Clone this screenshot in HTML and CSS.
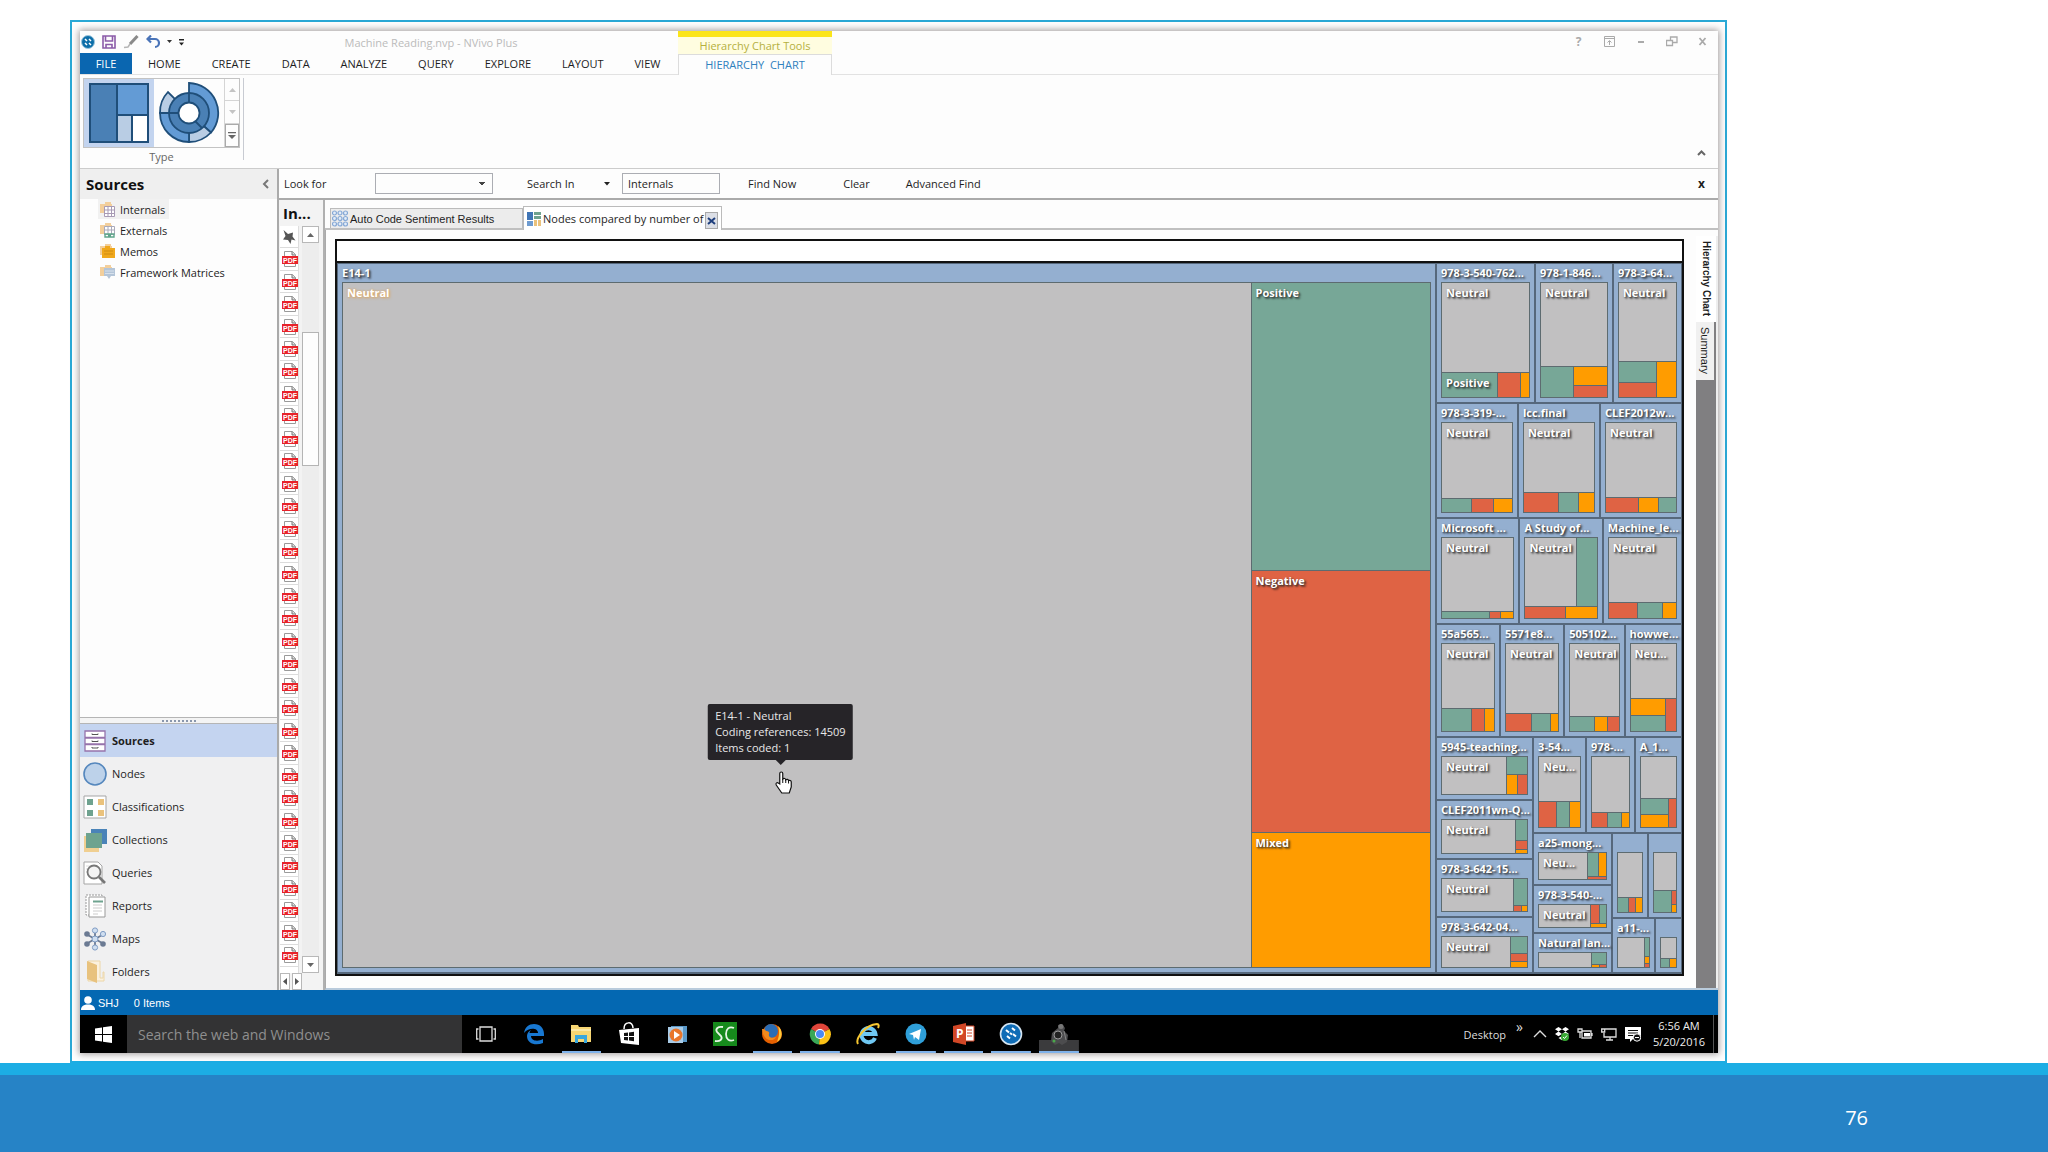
FILE: index.html
```html
<!DOCTYPE html>
<html lang="en">
<head>
    <meta charset="UTF-8">
    <meta name="viewport" content="width=device-width, initial-scale=1.0">
    <title>Machine Reading.nvp - NVivo Plus</title>
    <link rel="stylesheet" href="styles.css">
</head>
<body>
    <svg class="defs" width="0" height="0" aria-hidden="true">
        <symbol id="folder" viewBox="0 0 16 16">
            <path d="M0 3h5V1h6v2h1v9H0z" fill="#f3cf9c"/>
        </symbol>
    </svg>

    <main class="slide">
        <div class="frame">
            <div class="window">
                <header class="titlebar">
                    <div class="title-left">
                        <div class="title-row">
                            <div class="quick">
                                <svg width="14" height="14" viewBox="0 0 14 14"><circle cx="7" cy="7" r="6.500" fill="#0d6ea8" stroke="#9cc6dd"/><path d="M4 4l2 2M8 4l2 2M4 8l2 2M8 8l2 2" stroke="#fff" stroke-width="1.500"/></svg>
                                <svg width="14" height="14" viewBox="0 0 14 14"><path d="M1 1h12v12H1zM3.500 1v5h7V1M4 13V9.500h6V13" fill="none" stroke="#8b5ba8" stroke-width="1.600"/></svg>
                                <svg width="16" height="14" viewBox="0 0 16 14"><path d="M14.500 1L7 9" stroke="#8a8a8a" stroke-width="3"/><path d="M7 9l-2 3-4 .5" stroke="#b5b5b5" stroke-width="1.500" fill="none"/></svg>
                                <svg width="14" height="14" viewBox="0 0 14 14"><path d="M1.500 4H9a4 4 0 0 1 0 8M5 .5L1.500 4 5 7.500" fill="none" stroke="#4a74b8" stroke-width="2.200"/></svg>
                                <svg width="5" height="4" viewBox="0 0 5 4"><path d="M0 0h5L2.500 3z" fill="#333"/></svg>
                                <svg width="5" height="7" viewBox="0 0 5 7"><path d="M0 0h5v1.500H0zM0 3.500h5L2.500 6.500z" fill="#222"/></svg>
                            </div>
                            <h1 class="app-title">Machine Reading.nvp - NVivo Plus</h1>
                        </div>
                        <nav class="ribbon-tabs">
                            <button class="ribbon-tab file">FILE</button>
                            <button class="ribbon-tab">HOME</button>
                            <button class="ribbon-tab">CREATE</button>
                            <button class="ribbon-tab">DATA</button>
                            <button class="ribbon-tab">ANALYZE</button>
                            <button class="ribbon-tab">QUERY</button>
                            <button class="ribbon-tab">EXPLORE</button>
                            <button class="ribbon-tab">LAYOUT</button>
                            <button class="ribbon-tab">VIEW</button>
                        </nav>
                    </div>
                    <div class="context">
                        <div class="context-title">Hierarchy Chart Tools</div>
                        <button class="context-tab">HIERARCHY &nbsp;CHART</button>
                    </div>
                    <div class="window-controls">
                        <button class="wc" aria-label="Help"><b>?</b></button>
                        <button class="wc" aria-label="Ribbon options"><svg width="11" height="11" viewBox="0 0 11 11"><path d="M.5 .5h10v10H.5zM.5 2.500h10M5.500 9V5M3.500 6.500l2-2 2 2" fill="none" stroke="#aaa"/></svg></button>
                        <button class="wc" aria-label="Minimize"><svg width="8" height="10" viewBox="0 0 8 10"><path d="M1 5h6" stroke="#aaa" stroke-width="2"/></svg></button>
                        <button class="wc" aria-label="Restore"><svg width="12" height="11" viewBox="0 0 12 11"><path d="M.5 4.500h6v5h-6zM4.500 4V1h6.500v5.500H7" fill="none" stroke="#aaa" stroke-width="1.300"/></svg></button>
                        <button class="wc" aria-label="Close"><svg width="9" height="9" viewBox="0 0 9 9"><path d="M1.500 1l6 7M7.500 1l-6 7" stroke="#aaa" stroke-width="1.800"/></svg></button>
                    </div>
                </header>

                <section class="ribbon">
                    <div class="group">
                        <div class="gallery">
                            <button class="chart-type selected" aria-label="Treemap">
                                <svg width="60" height="60" viewBox="0 0 60 60"><g stroke="#1f4e79" stroke-width="2"><rect x="1" y="1" width="27" height="58" fill="#4a80b5"/><rect x="28" y="1" width="31" height="31" fill="#639bd5"/><rect x="28" y="32" width="15" height="27" fill="#b9cde4"/><rect x="43" y="32" width="16" height="27" fill="#fff"/></g></svg>
                            </button>
                            <button class="chart-type" aria-label="Sunburst">
                                <svg width="62" height="62" viewBox="0 0 62 62"><g stroke="#1f4e79" stroke-width="1.800"><path d="M31 1a30 30 0 0 1 22 49.500L31 31z" fill="#639bd5"/><path d="M53 50.500A30 30 0 0 1 31 60V31z" fill="#b9cde4"/><path d="M31 60A29 29 0 0 1 2 31h29z" fill="#639bd5"/><path d="M2 31A29 29 0 0 1 10 10l21 21z" fill="#b9cde4"/><circle cx="31" cy="31" r="20" fill="#4a80b5"/><path d="M31 11v10M11 31h10M44 46l-7-7" /><circle cx="31" cy="31" r="10.500" fill="#fff"/></g></svg>
                            </button>
                            <div class="gallery-scroll">
                                <button aria-label="Up"><svg width="7" height="4" viewBox="0 0 7 4"><path d="M0 4l3.500-4L7 4z" fill="#c4c4c4"/></svg></button>
                                <button aria-label="Down"><svg width="7" height="4" viewBox="0 0 7 4"><path d="M0 0l3.500 4L7 0z" fill="#c4c4c4"/></svg></button>
                                <button class="more" aria-label="More"><svg width="8" height="7" viewBox="0 0 8 7"><path d="M0 0h8v1.200H0zM0 3l4 4 4-4z" fill="#666"/></svg></button>
                            </div>
                        </div>
                        <div class="group-name">Type</div>
                    </div>
                    <button class="collapse" aria-label="Collapse the ribbon"><svg width="9" height="6" viewBox="0 0 9 6"><path d="M1 5l3.500-3.500L8 5" fill="none" stroke="#666" stroke-width="2"/></svg></button>
                </section>

                <div class="workspace">
                    <aside class="sidebar">
                        <div class="side-head">
                            <h2>Sources</h2>
                            <button aria-label="Collapse panel"><svg width="7" height="10" viewBox="0 0 7 10"><path d="M6 1L2 5l4 4" fill="none" stroke="#777" stroke-width="2"/></svg></button>
                        </div>
                        <ul class="tree">
                            <li><a href="#" class="tree-item current"><svg width="16" height="16"><use href="#folder"/><path d="M4.500 5.500h10v10h-10zM4.500 9h10M4.500 12.500h10M8 5.500v10M11.500 5.500v10" fill="#fff" stroke="#a89bb5"/></svg>Internals</a></li>
                            <li><a href="#" class="tree-item"><svg width="16" height="16"><use href="#folder"/><path d="M4.500 4.500h10v8h-10zM4.500 8h10M8 4.500v8M11.500 4.500v8" fill="#fff" stroke="#aab"/><path d="M5 12h4v3H5zM10 12h4v3h-4zM8 13.500h3" fill="none" stroke="#5fa58b" stroke-width="1.400"/></svg>Externals</a></li>
                            <li><a href="#" class="tree-item"><svg width="16" height="16"><use href="#folder"/><path d="M2 5h3V3h5v2h5v10H2z" fill="#f0a81c"/><path d="M4 8h9M4 11h9" stroke="#d08c10"/></svg>Memos</a></li>
                            <li><a href="#" class="tree-item"><svg width="16" height="16"><use href="#folder"/><path d="M4 4h11v8h-4l-2 3-2-3H4z" fill="#b4c5d8"/><path d="M5 7h9M5 9.500h9" stroke="#d7e1ec"/></svg>Framework Matrices</a></li>
                        </ul>
                        <div class="splitter"><span></span></div>
                        <nav class="areas">
                            <a href="#" class="area active"><svg width="24" height="24" viewBox="0 0 24 24"><g fill="#fff" stroke="#9673ab" stroke-width="1.300"><path d="M2 2h20v6.500H2zM2 9h20v6H2zM2 15.500h20V22H2z"/></g><path d="M9 4.500v1h6v-1M9 11.500v1h6v-1M9 18v1h6v-1" fill="none" stroke="#555"/></svg>Sources</a>
                            <a href="#" class="area"><svg width="24" height="24" viewBox="0 0 24 24"><circle cx="12" cy="12" r="11" fill="#bdd2ea" stroke="#5587bd" stroke-width="1.600"/></svg>Nodes</a>
                            <a href="#" class="area"><svg width="24" height="24" viewBox="0 0 24 24"><path d="M1 1h22v22H1z" fill="#fff" stroke="#a5a5a5"/><path d="M4 4h6v6H4zM4 15h6v6H4z" fill="#6fa28f"/><path d="M15 4h6v6h-6zM15 15h6v6h-6z" fill="#eac27c"/></svg>Classifications</a>
                            <a href="#" class="area"><svg width="24" height="24" viewBox="0 0 24 24"><path d="M1 8h15v16H1z" fill="#f0cf91"/><path d="M8 1h16v15H8z" fill="#4a83b8"/><path d="M3 5h16v15H3z" fill="#6ea38f"/></svg>Collections</a>
                            <a href="#" class="area"><svg width="24" height="24" viewBox="0 0 24 24"><path d="M1 1h14l4 4v18H1z" fill="#fff" stroke="#a5a5a5"/><path d="M3 5h12M3 8h12M3 11h12" stroke="#ddd"/><circle cx="11" cy="11" r="6.500" fill="#f4f4f4" stroke="#777" stroke-width="1.800"/><path d="M16 16l6 6" stroke="#777" stroke-width="2.600"/></svg>Queries</a>
                            <a href="#" class="area"><svg width="24" height="24" viewBox="0 0 24 24"><path d="M3 1h16v20H3z" fill="#fff" stroke="#999" stroke-dasharray="2 1"/><path d="M6 3h16v20H6z" fill="#fff" stroke="#999"/><path d="M10 7.500h10" stroke="#6ea38f" stroke-width="2"/><path d="M10 11h9M10 14h9M10 17h9M10 20h5" stroke="#ccc"/></svg>Reports</a>
                            <a href="#" class="area"><svg width="24" height="24" viewBox="0 0 24 24"><path d="M12 3v18M3 7l18 10M21 7L3 17" stroke="#6b7a93" stroke-width="1.800"/><g fill="#6b7a93"><circle cx="4" cy="7" r="2.800"/><circle cx="20" cy="17" r="2.800"/><circle cx="4" cy="17" r="2.800"/></g><g fill="#cfdef0" stroke="#7f9cc4"><circle cx="12" cy="3.500" r="2.600"/><circle cx="12" cy="20.500" r="2.600"/><circle cx="20" cy="7" r="2.600"/><circle cx="12" cy="12" r="3"/></g></svg>Maps</a>
                            <a href="#" class="area"><svg width="24" height="24" viewBox="0 0 24 24"><path d="M5 1h12v17h3v-6h1v9H5z" fill="#fbf1de" stroke="#ecd6a8"/><path d="M4 1l10 4v18L4 19z" fill="#e8c27e"/></svg>Folders</a>
                        </nav>
                    </aside>

                    <div class="main">
                        <form class="findbar">
                            <label class="look" for="look-for">Look for</label>
                            <select id="look-for"><option></option></select>
                            <button type="button" class="search-in">Search In <svg width="6" height="4" viewBox="0 0 6 4"><path d="M0 0h6L3 3.500z" fill="#222"/></svg></button>
                            <input type="text" id="scope" value="Internals" aria-label="Search scope">
                            <button type="button" class="find-btn">Find Now</button>
                            <button type="button" class="find-btn">Clear</button>
                            <button type="button" class="find-btn">Advanced Find</button>
                            <button type="button" class="find-close">x</button>
                        </form>

                        <div class="content">
                            <section class="list">
                                <h2 class="list-head">In...</h2>
                                <div class="list-body">
                                    <div class="rows" id="rows">
                                        <div class="pin"><svg width="14" height="14" viewBox="0 0 14 14"><path d="M1.500 0l4.500 4 5-1.500-.5 4 3 4-4-1-1 4.500L6 10 1 9.500 3.500 6z" fill="#555"/></svg></div>
                                    </div>
                                    <div class="scroll">
                                        <button aria-label="Scroll up"><svg width="7" height="4" viewBox="0 0 7 4"><path d="M0 4l3.500-4L7 4z" fill="#666"/></svg></button>
                                        <div class="track"><div class="thumb"></div></div>
                                        <button aria-label="Scroll down"><svg width="7" height="4" viewBox="0 0 7 4"><path d="M0 0l3.500 4L7 0z" fill="#666"/></svg></button>
                                    </div>
                                </div>
                                <div class="hscroll">
                                    <button aria-label="Scroll left"><svg width="4" height="7" viewBox="0 0 4 7"><path d="M4 0L0 3.500 4 7z" fill="#555"/></svg></button>
                                    <button aria-label="Scroll right"><svg width="4" height="7" viewBox="0 0 4 7"><path d="M0 0l4 3.500L0 7z" fill="#555"/></svg></button>
                                </div>
                            </section>

                            <section class="detail">
                                <div class="doc-tabs">
                                    <button class="doc-tab"><svg width="16" height="17" viewBox="0 0 16 17"><g fill="#e3ecf7" stroke="#86a9d6" stroke-width="1.200"><circle cx="2.500" cy="3" r="2"/><circle cx="8" cy="3" r="2"/><circle cx="13.500" cy="3" r="2"/><circle cx="2.500" cy="8.500" r="2"/><circle cx="8" cy="8.500" r="2"/><circle cx="13.500" cy="8.500" r="2"/><circle cx="2.500" cy="14" r="2"/><circle cx="8" cy="14" r="2"/><circle cx="13.500" cy="14" r="2"/></g></svg>Auto Code Sentiment Results</button>
                                    <div class="doc-tab current">
                                        <svg width="14" height="14" viewBox="0 0 14 14"><path d="M0 0h6v8H0z" fill="#3f74b5"/><path d="M0 9h6v5H0z" fill="#6d9bd0"/><path d="M7 0h7v3H7zM7 4h7v3H7z" fill="#6fa28f"/><path d="M7 8h3v6H7zM11 8h3v6h-3z" fill="#eac27c"/></svg>
                                        <span>Nodes compared by number of</span>
                                        <button class="tab-close" aria-label="Close tab"><svg width="9" height="8" viewBox="0 0 9 8"><path d="M1 1l7 6M8 1L1 7" stroke="#1f3f7d" stroke-width="2"/></svg></button>
                                    </div>
                                </div>
                                <div class="detail-body">
                                    <div class="chart">
                                        <div class="chart-title"></div>
                                        <div class="treemap" id="treemap"></div>
                                    </div>
                                    <div class="view-tabs">
                                        <button class="view-tab current">Hierarchy Chart</button>
                                        <button class="view-tab">Summary</button>
                                    </div>
                                </div>
                            </section>
                        </div>
                    </div>
                </div>

                <footer class="status">
                    <svg width="14" height="14" viewBox="0 0 14 14"><circle cx="7" cy="4" r="3.800" fill="#fff"/><path d="M0 14c0-4 3-5.500 7-5.500s7 1.500 7 5.500z" fill="#fff"/></svg>
                    <span class="user">SHJ</span>
                    <span>0 Items</span>
                </footer>

                <footer class="taskbar">
                    <button class="start" aria-label="Start"><svg width="17" height="17" viewBox="0 0 17 17"><path d="M0 2.500l7-1V8H0zM8 1.300L17 0v8H8zM0 9h7v6.500l-7-1zM8 9h9v8l-9-1.300z" fill="#fff"/></svg></button>
                    <input class="web-search" type="text" placeholder="Search the web and Windows" aria-label="Search the web and Windows">
                    <div class="apps">
                        <button class="app" aria-label="Task view"><svg width="20" height="18" viewBox="0 0 20 18"><path d="M4 2h12v14H4zM2.500 4H.7v10h1.800M17.500 4h1.800v10h-1.800" fill="none" stroke="#ddd" stroke-width="1.300"/></svg></button>
                        <button class="app" aria-label="Edge"><svg width="22" height="22" viewBox="0 0 22 22"><path d="M1 10C2 4 6 1 11 1c6 0 10 4 10 10v2H8c0 5 7 6 12 3v4c-7 3-16 1-16-7 0-3 2-5 4-6-1 1-1.500 2-1.500 3H15c0-5-9-6-14 0z" fill="#1878d2"/></svg></button>
                        <button class="app open" aria-label="File Explorer"><svg width="22" height="20" viewBox="0 0 22 20"><path d="M1 1h7l1 2h12v15H1z" fill="#f7d673"/><path d="M1 5h20v2H1z" fill="#fbe8a6"/><path d="M5 19v-8h12v8h-3v-4H8v4z" fill="#39a7dd"/></svg></button>
                        <button class="app" aria-label="Store"><svg width="22" height="24" viewBox="0 0 22 24"><path d="M1 8l20-2v17L3 21z" fill="#fff"/><path d="M6 7c0-8 9-8 9-1" fill="none" stroke="#fff" stroke-width="1.500"/><path d="M6 11l4-.5V14H6zM11 10.400l5-.6V14h-5zM6 15h4v3.500L6 18zM11 15h5v4.200l-5-.6z" fill="#111"/></svg></button>
                        <button class="app" aria-label="Media Player"><svg width="20" height="19" viewBox="0 0 20 19"><path d="M4 1h16v16H4z" fill="#5a98c8"/><path d="M1 2h15v16H1z" fill="#a9cbe6"/><circle cx="9" cy="10" r="6.500" fill="#e9762b"/><path d="M7 6l6 4-6 4z" fill="#fff"/></svg></button>
                        <button class="app" aria-label="SC"><svg width="24" height="24" viewBox="0 0 24 24"><path d="M0 0h24v24H0z" fill="#168a1c"/><path d="M10 5C5 4 2 7 4 10l4 4c2 3-1 6-6 5M21 6c-5-2-8 1-8 6s3 8 8 6" fill="none" stroke="#e7f5e7" stroke-width="1.800"/></svg></button>
                        <button class="app open" aria-label="Firefox"><svg width="22" height="22" viewBox="0 0 22 22"><circle cx="11" cy="11" r="10" fill="#e66000"/><circle cx="10" cy="8" r="7" fill="#2a6db5"/><path d="M1 6c1 0 3 0 4 2 2 0 4 1 3 3-1 3 3 5 7 3-2 5-13 5-14-8z" fill="#f28a1c"/><path d="M17 3c5 4 5 13-1 16 2-5 3-10 1-16z" fill="#ffc93a"/></svg></button>
                        <button class="app open" aria-label="Chrome"><svg width="22" height="22" viewBox="0 0 22 22"><path d="M11 11L2 6a10.500 10.500 0 0 1 18.500 0z" fill="#e0453a"/><path d="M11 11L2 6a10.500 10.500 0 0 0 8 15.500z" fill="#3aa757"/><path d="M11 11l9.500-5A10.500 10.500 0 0 1 10 21.500z" fill="#fbc116"/><circle cx="11" cy="11" r="5" fill="#fff"/><circle cx="11" cy="11" r="4" fill="#4a8af4"/></svg></button>
                        <button class="app" aria-label="Internet Explorer"><svg width="24" height="24" viewBox="0 0 24 24"><path d="M19 16a7 7 0 1 1 .5-4H7" fill="none" stroke="#6fc8f3" stroke-width="4"/><path d="M2 22C-1 17 9 3 21 2c2 0 2 2 1 4" fill="none" stroke="#f6c631" stroke-width="2"/></svg></button>
                        <button class="app open" aria-label="Telegram"><svg width="22" height="22" viewBox="0 0 22 22"><circle cx="11" cy="11" r="10.500" fill="#2f9fd9"/><path d="M4 11l12-5-2 11-4-3-1 3-1-5z" fill="#fff"/></svg></button>
                        <button class="app open" aria-label="PowerPoint"><svg width="22" height="22" viewBox="0 0 22 22"><path d="M12 3h9v15h-9z" fill="#fff" stroke="#d24726"/><path d="M14 7h5M14 10h5M14 13h5" stroke="#d24726"/><path d="M0 3l13-3v22L0 19z" fill="#d24726"/><text x="3" y="15" font-size="12" font-weight="bold" fill="#fff">P</text></svg></button>
                        <button class="app open" aria-label="NVivo"><svg width="24" height="24" viewBox="0 0 24 24"><circle cx="12" cy="12" r="10.500" fill="#0f6cb6" stroke="#d5e5f2" stroke-width="1.600"/><path d="M7 8l3 2.500M13 6l3 2.500M8 14l3 2.500M14 12l3 2.500M11 11l2 1.500" stroke="#fff" stroke-width="2"/></svg></button>
                        <button class="app open focus" aria-label="Recorder"><svg width="20" height="22" viewBox="0 0 20 22"><path d="M9 2l4-1 3 4-1 3 4 4-1 7-5 3-3-2-4 2-4-4 1-8 6-5z" fill="#4c4c4e"/><circle cx="9" cy="12" r="4" fill="#222" stroke="#9a9a9a"/><circle cx="12" cy="3.500" r="2.500" fill="#777"/><path d="M15 8l2 9" stroke="#858585"/><circle cx="5" cy="18" r="1.500" fill="#4aa84a"/></svg></button>
                    </div>
                    <div class="tray">
                        <span class="desktop">Desktop</span>
                        <span class="chevrons">»</span>
                        <svg width="14" height="8" viewBox="0 0 14 8"><path d="M1 7l6-6 6 6" fill="none" stroke="#ddd" stroke-width="1.400"/></svg>
                        <svg width="14" height="14" viewBox="0 0 14 14"><path d="M3.500 0L7 2.300 3.500 4.600 0 2.300zM10.500 0L14 2.300l-3.500 2.300L7 2.300zM3.500 4.600L7 7 3.500 9.300 0 7zM10.500 4.600L14 7l-3.500 2.300L7 7zM7 9l3.500 2L7 13.300 3.500 11z" fill="#fff"/><circle cx="10" cy="10" r="4" fill="#39a935"/><path d="M8 10l1.500 1.500L12 8.500" stroke="#fff" fill="none"/></svg>
                        <svg width="16" height="12" viewBox="0 0 16 12"><path d="M5 3h9v7H5zM15 5v3M1 1h4v3H1zM3 4v6" fill="none" stroke="#ddd" stroke-width="1.300"/><path d="M7 5h6v3.500H7z" fill="#fff"/></svg>
                        <svg width="16" height="13" viewBox="0 0 16 13"><path d="M4 1h11v8H3V5M9 9v3M5 12h7M.7 1h3v3h-3z" fill="none" stroke="#ddd" stroke-width="1.300"/></svg>
                        <svg width="16" height="15" viewBox="0 0 16 15"><path d="M0 0h16v12H8l-3 3v-3H0z" fill="#fff"/><path d="M3 3.500h10M3 6h10M3 8.500h5" stroke="#111"/><circle cx="12" cy="10.500" r="3.700" fill="#111" stroke="#fff"/><path d="M10 10.500h4" stroke="#fff"/></svg>
                        <div class="clock">6:56 AM<br>5/20/2016</div>
                        <div class="peek"></div>
                    </div>
                </footer>
            </div>
        </div>
        <footer class="slide-foot"><span>76</span></footer>
    </main>

    <script src="chart.js"></script>
</body>
</html>
```

FILE: styles.css
```css
* {
    box-sizing: border-box;
}
body {
    margin: 0;
    background: #fff;
    color: #1e1e1e;
    font-family: "Open Sans", "Noto Sans", sans-serif;
    font-size: 11px;
}
button, input, select {
    font: inherit;
    color: inherit;
    margin: 0;
    padding: 0;
    border: none;
    background: none;
}
button {
    display: flex;
    align-items: center;
    justify-content: center;
    white-space: nowrap;
}
a {
    color: inherit;
    text-decoration: none;
}
h1, h2, ul {
    margin: 0;
    padding: 0;
    list-style: none;
}
svg {
    display: block;
    flex: none;
}
.defs {
    position: absolute;
}

/* slide */
.slide {
    display: flex;
    flex-direction: column;
    height: 100vh;
    padding-top: 20px;
}
.frame {
    flex: 1;
    min-height: 0;
    display: flex;
    margin: 0 321px 0 70px;
    padding: 9px 7px 8px 8px;
    border: 2px solid #2ba9d6;
    border-bottom: 2px solid #1cade4;
}
.slide-foot {
    display: flex;
    align-items: center;
    justify-content: flex-end;
    height: 89px;
    padding: 8px 180px 0 0;
    border-top: 12px solid #1cade4;
    background: #2683c6;
    color: #fff;
    font-size: 20px;
}
.window {
    flex: 1;
    min-width: 0;
    display: flex;
    flex-direction: column;
    background: #fdfdfd;
    box-shadow: 0 0 7px 1px rgba(60, 50, 50, 0.5);
}

/* title bar */
.titlebar {
    display: flex;
    height: 44px;
}
.title-left {
    display: flex;
    flex-direction: column;
    width: 598px;
    border-bottom: 1px solid #e2e2e2;
}
.title-row {
    display: flex;
    height: 22px;
}
.quick {
    display: flex;
    align-items: center;
    gap: 7px;
    padding-left: 1px;
}
.app-title {
    flex: 1;
    text-align: center;
    color: #bbb;
    font-size: 11px;
    font-weight: normal;
    line-height: 23px;
}
.ribbon-tabs {
    display: flex;
    gap: 1px;
    height: 22px;
}
.ribbon-tab {
    padding: 0 15px;
}
.ribbon-tab.file {
    width: 52px;
    background: #0a66b0;
    color: #fff;
}
.context {
    width: 154px;
    display: flex;
    flex-direction: column;
}
.context-title {
    height: 23px;
    border-top: 6px solid #fbe51a;
    background: #fffde0;
    color: #b5b040;
    line-height: 18px;
    text-align: center;
}
.context-tab {
    flex: 1;
    padding-bottom: 1px;
    border: 1px solid #dcdcdc;
    border-bottom: none;
    color: #2f80bd;
}
.window-controls {
    flex: 1;
    display: flex;
    align-items: flex-start;
    justify-content: flex-end;
    border-bottom: 1px solid #e2e2e2;
}
.wc {
    width: 31px;
    height: 21px;
    color: #aaa;
    font-size: 12px;
}

/* ribbon */
.ribbon {
    display: flex;
    align-items: flex-end;
    justify-content: space-between;
    height: 94px;
    padding: 3px 12px 8px 3px;
    border-bottom: 1px solid #ccc;
}
.group {
    height: 82px;
    padding-right: 3px;
    border-right: 1px solid #c8cbd2;
}
.gallery {
    display: flex;
    height: 70px;
    border: 1px solid #c3c3c3;
}
.chart-type {
    width: 70px;
}
.chart-type.selected {
    background: #c3d4ef;
}
.gallery-scroll {
    display: flex;
    flex-direction: column;
    width: 15px;
    border-left: 1px solid #d5d5d5;
}
.gallery-scroll button {
    flex: 1;
    border-bottom: 1px solid #d5d5d5;
}
.gallery-scroll .more {
    border: 1px solid #aaa;
}
.group-name {
    color: #666;
    line-height: 17px;
    text-align: center;
}
.collapse {
    margin-bottom: 4px;
}

/* sources panel */
.workspace {
    flex: 1;
    min-height: 0;
    display: flex;
}
.sidebar {
    display: flex;
    flex-direction: column;
    width: 199px;
    border-right: 2px solid #aaa;
}
.side-head {
    display: flex;
    align-items: center;
    justify-content: space-between;
    height: 30px;
    padding: 0 8px 0 6px;
    background: #efefef;
}
h2 {
    font-size: 15px;
    color: #111;
}
.tree {
    flex: 1;
    padding-left: 18px;
}
.tree-item {
    display: inline-flex;
    align-items: center;
    gap: 4px;
    height: 20px;
    margin-bottom: 1px;
    padding: 0 4px 0 2px;
    vertical-align: top;
}
.tree-item.current {
    background: #f1f1f1;
}
.splitter {
    display: flex;
    align-items: center;
    justify-content: center;
    height: 7px;
    border: 1px solid #b5b5b5;
    border-width: 1px 0;
    background: #f4f4f4;
}
.splitter span {
    width: 34px;
    border-top: 2px dotted #8a97ad;
}
.areas {
    background: #f0f0f1;
    padding-bottom: 2px;
}
.area {
    display: flex;
    align-items: center;
    gap: 5px;
    height: 33px;
    padding-left: 3px;
}
.area.active {
    background: #c4d4f0;
    font-weight: bold;
}

/* find bar */
.main {
    flex: 1;
    min-width: 0;
    display: flex;
    flex-direction: column;
}
.findbar {
    display: flex;
    align-items: center;
    height: 31px;
    padding: 0 13px 0 5px;
    border-bottom: 2px solid #aaa;
}
.look {
    width: 91px;
}
.findbar select {
    width: 118px;
    height: 21px;
    margin-right: 34px;
    border: 1px solid #abadb3;
    appearance: none;
    background: linear-gradient(to bottom left, #444 50%, transparent 51%) right 10px center / 3px 3px no-repeat, linear-gradient(to bottom right, #444 50%, transparent 51%) right 7px center / 3px 3px no-repeat;
}
.search-in {
    justify-content: space-between;
    width: 83px;
    margin-right: 12px;
}
.findbar input {
    width: 98px;
    height: 21px;
    padding: 0 5px;
    border: 1px solid #abadb3;
}
.find-btn {
    margin-left: 28px;
    margin-right: 16px;
}
.find-btn + .find-btn {
    margin-left: 31px;
    margin-right: 5px;
}
.find-close {
    margin-left: auto;
    font-size: 12px;
    font-weight: bold;
}

/* list of internals */
.content {
    flex: 1;
    min-height: 0;
    display: flex;
}
.list {
    display: flex;
    flex-direction: column;
    width: 46px;
    padding-left: 1px;
    border-right: 2px solid #b0b0b0;
    background: #f3f3f3;
}
.list-head {
    height: 26px;
    padding-left: 3px;
    line-height: 27px;
}
.list-body {
    flex: 1;
    min-height: 0;
    display: flex;
    gap: 3px;
}
.rows {
    display: flex;
    flex-direction: column;
    width: 19px;
    padding-bottom: 6px;
    background: #fff;
    border-right: 1px solid #ddd;
}
.pin, .row {
    flex: 1;
    min-height: 0;
    display: flex;
    align-items: center;
    padding-left: 2px;
    border-bottom: 1px solid #dcdcdc;
}
.row text {
    font-family: "Liberation Sans", sans-serif;
}
.scroll {
    display: flex;
    flex-direction: column;
    width: 17px;
}
.scroll button, .hscroll button {
    height: 17px;
    border: 1px solid #b8b8b8;
    background: #fff;
}
.track {
    flex: 1;
    padding-top: 89px;
    background: #ededed;
}
.thumb {
    height: 134px;
    border: 1px solid #b4b4b4;
    background: #fdfdfd;
}
.hscroll {
    display: flex;
    gap: 2px;
    height: 17px;
}
.hscroll button {
    width: 10px;
}

/* detail view */
.detail {
    flex: 1;
    min-width: 0;
    display: flex;
    flex-direction: column;
}
.doc-tabs {
    display: flex;
    align-items: flex-end;
    height: 30px;
    padding-left: 5px;
    border-bottom: 2px solid #c0c0c0;
}
.doc-tab {
    display: flex;
    align-items: center;
    justify-content: flex-start;
    gap: 2px;
    width: 193px;
    height: 20px;
    padding-left: 1px;
    border: 1px solid #bbb;
    border-bottom: none;
    background: #ececec;
    font-family: "Liberation Sans", sans-serif;
    white-space: nowrap;
}
.doc-tab.current {
    width: 199px;
    height: 24px;
    margin-bottom: -2px;
    padding: 0 3px;
    background: #fff;
    font-family: inherit;
}
.tab-close {
    width: 17px;
    height: 17px;
    margin: 4px 0 0 auto;
    border: 1px solid #a9a9a9;
    background: #dcdfe6;
}
.detail-body {
    flex: 1;
    min-height: 0;
    display: flex;
    justify-content: space-between;
    gap: 12px;
    padding-left: 9px;
    border-left: 1px solid #aaa;
    border-bottom: 2px solid #b9cbdc;
}
.chart {
    flex: 1;
    min-width: 0;
    display: flex;
    flex-direction: column;
    margin: 9px 0 12px;
    border: 2px solid #111;
}
.chart-title {
    height: 22px;
    border-bottom: 2px solid #111;
    background: #fff;
}
.view-tabs {
    display: flex;
    flex-direction: column;
    width: 22px;
    margin-top: 6px;
    border-right: 2px solid #eee;
    background: #807f81;
}
.view-tab {
    height: 58px;
    margin-right: 2px;
    background: #f0f0f0;
    writing-mode: vertical-rl;
    font-family: "Liberation Sans", sans-serif;
}
.view-tab.current {
    height: 86px;
    margin-right: 0;
    background: #fff;
    font-size: 10px;
    font-weight: bold;
}

/* treemap */
.treemap {
    flex: 1;
    min-height: 0;
    display: flex;
    padding: 1px 1px 2px;
    background: #56687c;
    color: #fff;
    font-weight: bold;
    text-shadow: 1px 1px 2px #333, 2px 2px 2px rgba(0, 0, 0, 0.4);
}
.h, .v {
    display: flex;
    gap: 2px;
    min-width: 0;
    min-height: 0;
}
.v {
    flex-direction: column;
}
.cell {
    min-width: 0;
    min-height: 0;
    display: flex;
    flex-direction: column;
    padding: 0 4px 4px;
    background: #94afd0;
}
.cell-name {
    height: 18px;
    line-height: 18px;
    white-space: nowrap;
}
.parts {
    flex: 1;
    min-height: 0;
    display: flex;
    padding: 1px;
    background: #5d6b70;
}
.parts .h, .parts .v {
    gap: 1px;
}
.seg {
    position: relative;
    min-width: 0;
    min-height: 0;
    padding-left: 4px;
    line-height: 20px;
    white-space: nowrap;
}
.neutral { background: #c1c0c1; }
.positive { background: #77a797; }
.negative { background: #df6344; }
.mixed { background: #ff9c00; }
.hover {
    text-shadow: 0 0 2px #e0a860, 1px 1px 3px #dba45c;
}
.tooltip {
    position: absolute;
    left: 48.2%;
    top: 61.6%;
    transform: translateX(-50%);
    padding: 4px 7px;
    border-radius: 2px;
    background: #262428;
    color: #e8e8e8;
    font-weight: normal;
    line-height: 16px;
    text-shadow: none;
}
.tooltip::after {
    content: "";
    position: absolute;
    left: 50%;
    top: 100%;
    margin-left: -5px;
    border: 5px solid transparent;
    border-top-color: #262428;
}
.cursor {
    position: absolute;
    left: 50%;
    top: 100%;
    margin: 11px 0 0 -6px;
}

/* status bar and taskbar */
.status {
    display: flex;
    align-items: center;
    gap: 3px;
    height: 25px;
    padding-left: 1px;
    background: #0468b2;
    color: #fff;
    font-family: "Liberation Sans", sans-serif;
}
.user {
    margin-right: 12px;
}
.taskbar {
    display: flex;
    height: 38px;
    background: #000;
    color: #ddd;
}
.start {
    width: 47px;
}
.web-search {
    width: 335px;
    padding: 0 11px;
    background: #333334;
    font-size: 14px;
}
.web-search::placeholder {
    color: #8f8f8f;
}
.apps {
    display: flex;
    width: 621px;
}
.app {
    flex: 1;
    border: 0 solid #000;
    border-width: 0 4px;
}
.app.open {
    background: linear-gradient(#7fb2ea, #7fb2ea) bottom / 100% 2px no-repeat;
}
.app.focus {
    background: linear-gradient(#7fb2ea, #7fb2ea) bottom / 100% 2px no-repeat, linear-gradient(#3b3b3d, #3b3b3d) bottom / 100% 13px no-repeat;
}
.tray {
    display: flex;
    align-items: center;
    gap: 8px;
    margin-left: auto;
}
.chevrons {
    margin: 0 2px 16px;
    font-size: 14px;
}
.clock {
    width: 60px;
    color: #eee;
    line-height: 16px;
    text-align: center;
}
.peek {
    width: 5px;
    height: 38px;
    margin-left: -4px;
    border-left: 1px solid #555;
}
```

FILE: chart.js
```js
const KINDS = { n: 'neutral', p: 'positive', g: 'negative', m: 'mixed' };

// h and v are nested rows and columns; the first argument is the share of the parent
const h = (size, ...kids) => box('h', size, kids);
const v = (size, ...kids) => box('v', size, kids);
const n = (size, label) => seg('n', size, label);
const p = (size, label) => seg('p', size, label);
const g = (size, label) => seg('g', size, label);
const m = (size, label) => seg('m', size, label);

function box(dir, size, kids) {
    return `<div class="${dir}" style="flex: ${size} 1 0">${kids.join('')}</div>`;
}

function seg(kind, size, label = '', cls = '', extra = '') {
    return `<div class="seg ${KINDS[kind]} ${cls}" style="flex: ${size} 1 0">${label}${extra}</div>`;
}

function cell(size, name, parts) {
    return `<div class="cell" style="flex: ${size} 1 0"><div class="cell-name">${name}</div><div class="parts">${parts}</div></div>`;
}

const tooltip = `
    <div class="tooltip" role="tooltip">E14-1 - Neutral<br>Coding references: 14509<br>Items coded: 1
        <svg class="cursor" width="18" height="23" viewBox="0 0 18 23"><path d="M5 13V2.500C5 .5 8 .5 8 2.500V8c1-1 3-.5 3 .8 1-1 2.700-.4 2.800.8 1.200-.7 2.700 0 2.700 1.400V16l-2 6H7l-5.500-8c-1-2 1-3 2-2z" fill="#fff" stroke="#111" stroke-width="1.200"/><path d="M8 8v4M11 9v3M13.800 10v2.500" stroke="#111"/></svg>
    </div>`;

const pdf = `
    <svg width="16" height="16" viewBox="0 0 16 16"><path d="M2.500 .5h8l3 3v12h-11z" fill="#fff" stroke="#9a9a9a"/><path d="M10 .5v3.500h3.500" fill="#ddd" stroke="#777"/><rect x="0" y="5" width="16" height="8" fill="#e8222a"/><text x="8" y="12" text-anchor="middle" font-size="7" font-weight="bold" fill="#fff">PDF</text></svg>`;

const main = cell(1098, 'E14-1', h(1,
    seg('n', 911, 'Neutral', 'hover', tooltip),
    v(180, p(288, 'Positive'), g(262, 'Negative'), m(135, 'Mixed'))));

const rest = v(246,
    h(139,
        cell(303, '978-3-540-762...', v(1, n(271, 'Neutral'), h(71, p(187, 'Positive'), g(67), m(16)))),
        cell(231, '978-1-846...', v(1, n(253, 'Neutral'), h(90, p(93), v(107, m(57), g(33))))),
        cell(201, '978-3-64...', v(1, n(238, 'Neutral'), h(105, v(123, p(61), g(43)), m(52))))),
    h(114,
        cell(244, '978-3-319-...', v(1, n(232, 'Neutral'), h(38, p(97), g(66), m(52)))),
        cell(245, 'lcc.final', v(1, n(214, 'Neutral'), h(56, g(117), p(55), m(43)))),
        cell(244, 'CLEF2012w...', v(1, n(230, 'Neutral'), h(40, g(106), m(60), p(50))))),
    h(106,
        cell(249, 'Microsoft ...', v(1, n(220, 'Neutral'), h(20, p(166), g(24), m(33)))),
        cell(249, 'A Study of...', v(1, h(206, n(164, 'Neutral'), p(56)), h(35, g(124), m(96)))),
        cell(235, 'Machine_le...', v(1, n(194, 'Neutral'), h(48, g(93), p(78), m(36))))),
    h(112,
        cell(192, '55a565...', v(1, n(194, 'Neutral'), h(68, p(108), g(33), m(22)))),
        cell(193, '5571e8...', v(1, n(209, 'Neutral'), h(53, g(89), p(61), m(13)))),
        cell(179, '505102...', v(1, n(218, 'Neutral'), h(44, p(86), m(34), g(29)))),
        cell(169, 'howwe...', v(1, n(162, 'Neu...'), h(100, v(122, m(53), p(47)), g(20))))),
    h(236,
        v(288,
            cell(63, '5945-teaching...', h(1, n(195, 'Neutral'), v(66, p(55), h(63, m(37), g(27))))),
            cell(59, 'CLEF2011wn-Q...', h(1, n(223, 'Neutral'), v(37, p(68), g(27), m(8)))),
            cell(58, '978-3-642-15...', h(1, n(220, 'Neutral'), v(42, p(82), h(14, g(25), m(17))))),
            cell(56, '978-3-642-04...', h(1, n(209, 'Neutral'), v(53, p(55), g(23), m(18))))),
        v(445,
            h(95,
                cell(161, '3-54...', v(1, n(140, 'Neu...'), h(77, g(65), p(39), m(29)))),
                cell(145, '978-...', v(1, n(172), h(43, g(56), p(42), m(16)))),
                cell(139, 'A_1...', v(1, n(129), h(86, v(99, p(50), m(37)), g(11))))),
            h(141,
                v(236,
                    cell(53, 'a25-mong...', h(1, n(147, 'Neu...'), v(61, h(75, p(38), m(22)), g(6)))),
                    cell(48, '978-3-540-...', h(1, n(158, 'Neutral'), v(50, h(61, g(30), p(19)), m(9)))),
                    cell(39, 'Natural lan...', h(1, n(160), v(48, p(36), h(8, m(31), g(16)))))),
                v(209,
                    h(86,
                        cell(107, '', v(1, n(141), h(43, p(46), g(14), m(12)))),
                        cell(102, '', v(1, n(119), h(65, p(55), v(18, g(43), m(22)))))),
                    h(55,
                        cell(138, 'a11-...', h(1, n(91), v(16, p(60), m(20), g(10)))),
                        cell(71, '', v(1, n(66), h(27, p(26), m(15))))))))));

document.getElementById('treemap').innerHTML = h(1, main, rest);

document.getElementById('rows').insertAdjacentHTML('beforeend',
    `<div class="row">${pdf}</div>`.repeat(32));
```
